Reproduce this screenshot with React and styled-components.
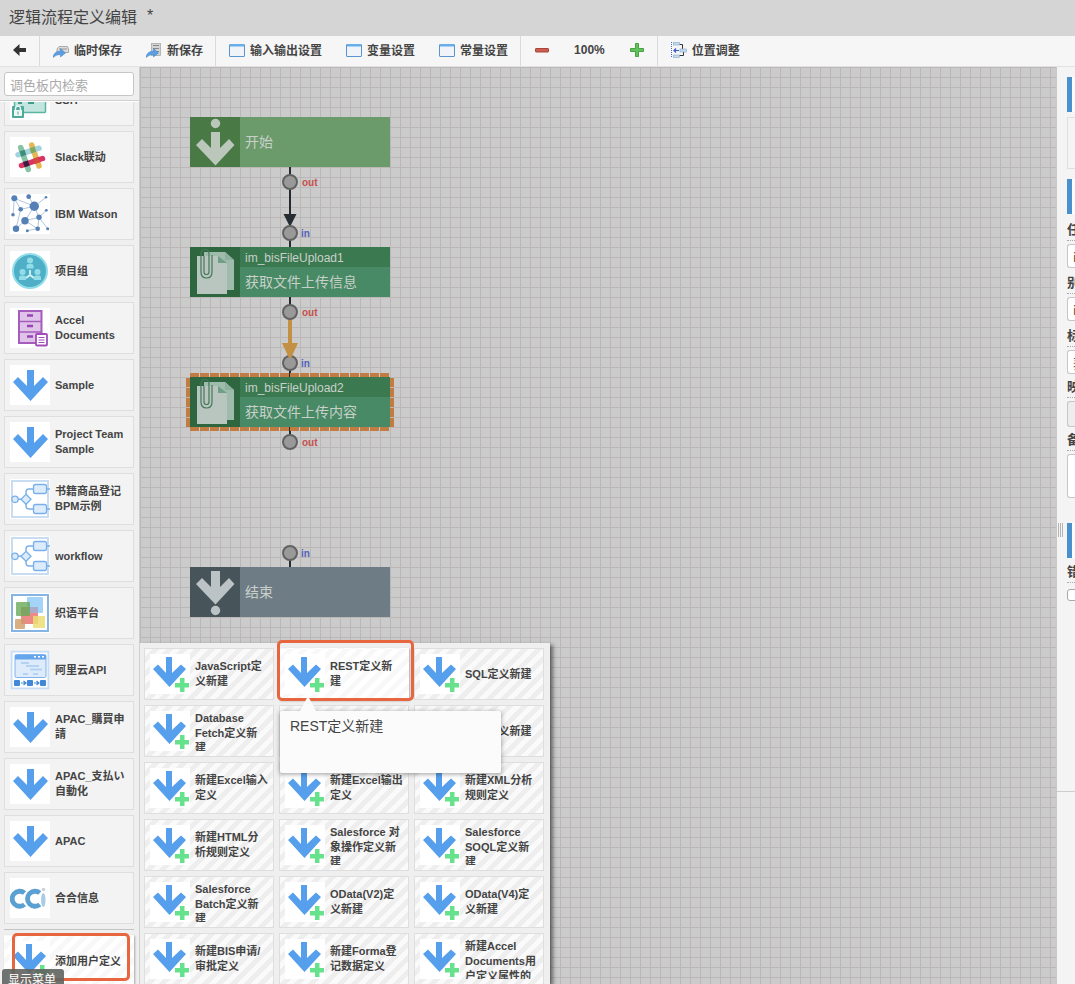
import React from "react";
import styled, { createGlobalStyle, css } from "styled-components";

const GlobalStyle = createGlobalStyle`
  * { box-sizing: border-box; }
  body {
    margin: 0;
    background: #f4f4f4;
    color: #444;
    font-family: "Liberation Sans", "Noto Sans CJK SC", sans-serif;
  }
  button, input, textarea { font-family: inherit; color: inherit; margin: 0; }
`;

/* ---------- page frame ---------- */

const Page = styled.div`
  display: flex;
  flex-direction: column;
  height: 100vh;
  overflow: hidden;
`;

const Header = styled.header`
  flex: 0 0 36px;
  display: flex;
  align-items: center;
  gap: 10px;
  padding: 0 9px 5px;
  background: #d5d5d5;
`;

const Title = styled.h1`
  margin: 0;
  font: 400 16px/24px "Noto Sans CJK SC", sans-serif;
`;

const Toolbar = styled.nav`
  flex: 0 0 31px;
  display: flex;
  background: #f6f6f6;
  border-bottom: 1px solid #e2e2e2;
`;

const ToolGroup = styled.div`
  display: flex;
  padding-left: 1px;
  & + & { border-left: 1px solid #dadada; }
`;

const ToolButton = styled.button`
  display: flex;
  align-items: center;
  gap: 5px;
  padding: 0 12px 3px;
  border: 0;
  background: none;
  font: 700 12px/18px "Noto Sans CJK SC", sans-serif;
  white-space: nowrap;
  svg { flex: none; }
`;

const Zoom = styled.output`
  display: flex;
  align-items: center;
  padding: 0 12px 3px;
  font: 700 12px/18px "Liberation Sans", sans-serif;
`;

const Body = styled.div`
  flex: 1;
  min-height: 0;
  display: flex;
`;

/* ---------- palette ---------- */

const Sidebar = styled.aside`
  flex: 0 0 140px;
  display: flex;
  flex-direction: column;
  background: #efefef;
  border-right: 1px solid #cfcfcf;
`;

const SearchBar = styled.div`
  flex: 0 0 34px;
  padding: 5px 5px 0 4px;
  border-bottom: 1px solid #d0d0d0;
`;

const SearchInput = styled.input`
  display: block;
  width: 100%;
  height: 24px;
  padding: 0 5px;
  border: 1px solid #c6c6c6;
  border-radius: 3px;
  background: #fff;
  font: 400 13px/20px "Noto Sans CJK SC", sans-serif;
  &::placeholder { color: #aaa; opacity: 1; }
`;

const PaletteList = styled.div`
  flex: 1;
  min-height: 0;
  display: flex;
  flex-direction: column;
  justify-content: flex-end;
  gap: 5px;
  padding: 0 5px 5px 4px;
  border-top: 1px solid #fff;
  overflow: hidden;
`;

const PaletteFooter = styled.div`
  position: relative;
  flex: 0 0 55px;
  min-height: 0;
  height: 55px;
  margin: 0 5px 0 4px;
  padding-top: 5px;
  border-top: 1px solid #c4c4c4;
`;

const Card = styled.button`
  flex: none;
  display: flex;
  align-items: center;
  gap: 5px;
  width: 130px;
  height: 52px;
  padding: 5px;
  border: 1px solid #dedede;
  background: #f3f3f3;
  text-align: left;
  svg { flex: none; background: #fff; }
  ${(p) => p.$striped && css`
    background: repeating-linear-gradient(135deg, #fafafa 0 5px, #eee 5px 10px);
  `}
  ${(p) => p.$active && css`
    border-color: transparent;
    background: repeating-linear-gradient(135deg, #fff 0 5px, #f8f8f8 5px 10px);
    box-shadow: 1px 1px 2px rgba(0, 0, 0, 0.3);
  `}
`;

const CardLabel = styled.span`
  width: 73px;
  max-height: 40px;
  overflow: hidden;
  font: 700 11px/15px "Liberation Sans", "Noto Sans CJK SC", sans-serif;
`;

const Highlight = styled.div`
  position: absolute;
  border: 3px solid #e8663f;
  border-radius: 5px;
  pointer-events: none;
`;

const FooterHighlight = styled(Highlight)`
  top: 3px;
  left: 8px;
  width: 118px;
  height: 48px;
`;

const MenuHighlight = styled(Highlight)`
  top: -8px;
  left: -2px;
  width: 137px;
  height: 61px;
`;

const StatusTip = styled.div`
  position: absolute;
  left: -2px;
  bottom: 0;
  width: 62px;
  height: 15px;
  padding-left: 6px;
  overflow: hidden;
  border-radius: 3px 3px 0 0;
  background: rgba(95, 99, 95, 0.9);
  color: #fff;
  font: 400 12px/20px "Noto Sans CJK SC", sans-serif;
`;

/* ---------- flow canvas ---------- */

const Canvas = styled.main`
  position: relative;
  flex: 1;
  min-width: 0;
  overflow: hidden;
  background:
    linear-gradient(90deg, #bbb7b7 1px, transparent 1px) 0 0 / 10px 10px,
    linear-gradient(#bbb7b7 1px, #cbcbcb 1px) 0 0 / 10px 10px;
  border-right: 1px solid #c8c8c8;
`;

const Wires = styled.svg`
  position: absolute;
  left: 0;
  top: 0;
`;

const Node = styled.div`
  position: absolute;
  left: 50px;
  top: ${(p) => p.$top}px;
  width: 200px;
  height: 50px;
  display: flex;
  background: ${(p) => p.$color};
  color: #c9d0ca;
`;

const NodeIcon = styled.div`
  flex: 0 0 50px;
  background: ${(p) => p.$color};
  svg { display: block; }
`;

const NodeText = styled.div`
  flex: 1;
  display: flex;
  flex-direction: column;
  justify-content: center;
`;

const NodeId = styled.div`
  padding: 2px 0 0 5px;
  background: #3b7a50;
  font-size: 12px;
  line-height: 18px;
`;

const NodeName = styled.div`
  padding: 0 0 2px 5px;
  font: 400 14px/28px "Noto Sans CJK SC", sans-serif;
`;

const PortLabel = styled.span`
  position: absolute;
  left: ${(p) => (p.$out ? 162 : 161)}px;
  top: ${(p) => p.$y - 5}px;
  color: ${(p) => (p.$out ? "#c4514d" : "#5261ba")};
  font-weight: 700;
  font-size: 10px;
  line-height: 12px;
`;

/* ---------- user definition menu ---------- */

const Menu = styled.div`
  position: absolute;
  left: 0;
  bottom: 0;
  width: 410px;
  height: 341px;
  background: #efefef;
  box-shadow: 3px 2px 4px rgba(0, 0, 0, 0.5);
`;

const MenuGrid = styled.div`
  display: grid;
  grid-template-columns: repeat(3, 130px);
  gap: 5px;
  padding: 5px 4px 0;
`;

const MenuCell = styled.div`
  position: relative;
`;

const Tooltip = styled.div`
  position: absolute;
  z-index: 2;
  top: 63px;
  left: 1px;
  width: 221px;
  height: 62px;
  padding: 5px 10px;
  border-radius: 2px;
  background: #fbfbfb;
  box-shadow: 0 1px 5px rgba(0, 0, 0, 0.4);
  font-size: 14px;
  line-height: 20px;
  &::before {
    content: "";
    position: absolute;
    left: 20px;
    top: -15px;
    border: 8px solid transparent;
    border-top: 0;
    border-bottom: 15px solid #fbfbfb;
  }
`;

/* ---------- property panel ---------- */

const Panel = styled.aside`
  flex: 0 0 18px;
  display: flex;
  flex-direction: column;
  overflow: hidden;
  background: #f4f4f4;
`;

const PanelTop = styled.div`
  flex: 1;
  min-height: 0;
  display: flex;
`;

const PanelBottom = styled.div`
  flex: 0 0 193px;
  border-top: 1px solid #cdcdcd;
`;

const Splitter = styled.div`
  flex: 0 0 10px;
  padding: 456px 4px 0 1px;
  &::before {
    content: "";
    display: block;
    height: 14px;
    background: repeating-linear-gradient(90deg, #b5b5b5 0 1px, transparent 1px 2px);
  }
`;

const Form = styled.form`
  flex: 1;
  min-width: 0;
  padding-top: 10px;
  overflow: hidden;
`;

const Section = styled.div`
  height: 35px;
  margin-bottom: ${(p) => p.$gap}px;
  border-left: 5px solid #4a90cc;
  background: #fcfcfc;
`;

const Preview = styled.div`
  height: 52px;
  margin-bottom: 10px;
  padding: 5px;
  border: 1px solid #dedede;
  border-right: 0;
  &::before { content: ""; display: block; height: 40px; background: #fff; }
`;

const Field = styled.label`
  display: block;
  margin-bottom: ${(p) => p.$gap || 4}px;
  overflow: hidden;
  font: 700 13px/20px "Noto Sans CJK SC", sans-serif;
`;

const FieldName = styled.span`
  display: block;
  height: 22px;
  margin-bottom: 3px;
  border-bottom: 1px dotted #aaa;
`;

const inputBox = css`
  display: block;
  width: 100%;
  border: 1px solid #c6c6c6;
  border-right: 0;
  border-radius: 3px 0 0 3px;
  background: #fff;
  padding: 0 0 0 5px;
`;

const TextInput = styled.input`
  ${inputBox}
  height: 24px;
  font-size: 13px;
`;

const MapButton = styled.button`
  ${inputBox}
  height: 26px;
  background: #ededed;
`;

const Note = styled.textarea`
  ${inputBox}
  height: 44px;
  resize: none;
  overflow: hidden;
`;

const Check = styled.input`
  appearance: none;
  display: block;
  margin-top: 6px;
  width: 12px;
  height: 12px;
  border: 1px solid #a8a8a8;
  border-radius: 3px;
  background: #fff;
`;

/* ---------- drawings ---------- */

const Svg40 = ({ children }) => (
  <svg width="40" height="40" viewBox="0 0 40 40" fill="none" aria-hidden="true">{children}</svg>
);

const ArrowIcon = () => (
  <Svg40>
    <path d="M17 5h7v16l9-9 5 5-17.500 19L3 17l5-5 9 9z" fill="#559fec" />
  </Svg40>
);

const ArrowPlusIcon = () => (
  <Svg40>
    <path d="M16 3h6v16l9-8.500 5 4.500-16.500 18L3 15l5-4.500 8 8.500z" fill="#559fec" />
    <path d="M30 24h4.500v5H39v4.500h-4.500V38H30v-4.500h-5V29h5z" fill="#66e28d" />
  </Svg40>
);

const SshIcon = () => (
  <Svg40>
    <rect x="4.500" y="8.500" width="31" height="24" rx="1" fill="#c3e5df" stroke="#5bb5a3" strokeWidth="1.500" />
    <path d="M8 23h4M18 23h6" stroke="#3f9c8b" strokeWidth="2" />
    <rect x="2" y="26" width="12" height="12" rx="1" fill="#4fa999" />
    <rect x="4" y="30" width="8" height="6" fill="#eaf7f4" />
    <path d="M5.500 30v-1.500a2.500 2.500 0 0 1 5 0V30" stroke="#eaf7f4" strokeWidth="1.400" />
    <path d="M8 31.500v3" stroke="#4fa999" />
  </Svg40>
);

const SlackIcon = () => (
  <Svg40>
    <g strokeWidth="5.500" strokeLinecap="round">
      <path d="M10.700 10.500l7.600 22" stroke="#86c3a5" />
      <path d="M21.700 8l7.300 21" stroke="#e5b854" />
      <path d="M8 17.800l21-6.600" stroke="#a3d3df" />
      <path d="M11.500 28.500l21-7" stroke="#d83564" />
    </g>
    <g strokeWidth="5.500">
      <path d="M10.300 17l5.200-1.600" stroke="#3d8f7a" />
      <path d="M20.400 13.800l5-1.600" stroke="#83a95d" />
      <path d="M13.800 27.700l5-1.700" stroke="#3d1a42" />
      <path d="M24 24.300l5.200-1.700" stroke="#d9483f" />
    </g>
  </Svg40>
);

const WATSON_NODES = [
  [4.3, 4.3, 3], [18.7, 2.7, 2.4], [36, 3.3, 1.3], [24.3, 12.3, 4.7], [10.7, 15.3, 2.3],
  [3, 20.7, 1.8], [36.3, 16.3, 1.4], [15, 26.7, 3.7], [29, 23.3, 2.7], [6, 34.7, 3.2],
  [17.3, 36.7, 1.5], [27.7, 34.7, 2.3], [37.7, 34.7, 1.5],
];

const WatsonIcon = () => (
  <Svg40>
    <path
      d="M4.300 4.300l20 8M4.300 4.300l6.400 11M4.300 4.300L3 20.700M18.700 2.700l5.600 9.600L36 3.300M10.700 15.300l13.600-3M10.700 15.300L6 34.700M24.300 12.300L15 26.700M24.300 12.300l4.700 11 7.300-7M29 23.300l-14 3.400-9 8M15 26.700l12.700 8-10.400 2M29 23.300l-1.300 11.400M29 23.300l8.700 11.400"
      stroke="#9db7d6" strokeWidth="0.800"
    />
    {WATSON_NODES.map(([x, y, r]) => <circle key={`${x}-${y}`} cx={x} cy={y} r={r} fill="#5580b5" />)}
  </Svg40>
);

const TeamIcon = () => (
  <Svg40>
    <circle cx="20" cy="20" r="17" fill="#4eafc7" stroke="#8fdde8" strokeWidth="2" />
    <path d="M20 19v5l-4 3M20 24l4 3" stroke="#d4f2f6" strokeWidth="1.800" />
    {[[20, 6.5], [12.5, 18], [27.5, 18]].map(([x, y]) => (
      <g key={x} fill="#93dde9">
        <circle cx={x} cy={y + 3} r="3" />
        <path d={`M${x - 3.5} ${y + 11}v-2.500q0-2 2-2h3q2 0 2 2v2.500z`} />
      </g>
    ))}
  </Svg40>
);

const CabinetIcon = () => (
  <Svg40>
    <rect x="9" y="3" width="22.500" height="32" fill="#dfc3e8" stroke="#a55cbc" strokeWidth="2" />
    <path d="M9 13.500h22M9 24h22" stroke="#a55cbc" strokeWidth="1.500" />
    <path d="M17 7.500h6M17 18h6M17 28.500h6" stroke="#9745b3" strokeWidth="2.500" />
    <rect x="26" y="26" width="11" height="11.500" rx="1" fill="#fff" stroke="#a04fba" strokeWidth="1.800" />
    <path d="M28.500 29.500h6M28.500 32h6M28.500 34.500h6" stroke="#a04fba" strokeWidth="1.200" />
  </Svg40>
);

const BpmIcon = () => (
  <Svg40>
    <rect x="2" y="2" width="36" height="36" stroke="#c8ddf2" strokeWidth="2" />
    <path d="M8 20.300h3M16 15.500V13q0-3 3-3h4M16 25v2q0 3 3 3h4M37 10h3M37 30h3" stroke="#79b0ea" strokeWidth="1.400" />
    <g fill="#dcecfb" stroke="#79b0ea" strokeWidth="1.300">
      <circle cx="5" cy="20.300" r="3.200" />
      <path d="M16 15.300l5 5-5 5-5-5z" />
      <rect x="23.500" y="5.500" width="13" height="9" rx="2" />
      <rect x="23.500" y="25.500" width="13" height="9" rx="2" />
    </g>
  </Svg40>
);

const TilesIcon = () => (
  <Svg40>
    <rect x="2" y="2" width="36" height="36" stroke="#86b5e3" strokeWidth="2" />
    <rect x="17" y="4" width="16" height="16" rx="1" fill="#a4d5f8" />
    <rect x="11" y="14" width="17" height="17" rx="1" fill="#e76d69" fillOpacity="0.800" />
    <rect x="17" y="14" width="11" height="6" fill="#a9abc9" />
    <rect x="6" y="9" width="14" height="14" rx="1" fill="#68aa58" fillOpacity="0.800" />
    <rect x="23" y="23" width="12" height="12" rx="1" fill="#eddd73" fillOpacity="0.850" />
    <rect x="5" y="26" width="10" height="10" rx="1" fill="#cf9b65" fillOpacity="0.800" />
  </Svg40>
);

const CloudApiIcon = () => (
  <Svg40>
    <rect x="1.500" y="1.500" width="37" height="37" stroke="#c8ddf2" strokeWidth="2" />
    <rect x="5" y="4.500" width="31" height="23" rx="1.500" fill="#ddebfa" stroke="#7fb3ed" />
    <path d="M5 5h31v4.500H5z" fill="#65a6ec" />
    <path d="M24 6.800h2M28 6.800h2M32 6.800h2" stroke="#fff" strokeWidth="1.500" />
    <path d="M11 13h8M16 16h13M13 24h5M23 24h5M20 19.500h12" stroke="#b4d2f3" strokeWidth="2" />
    <g fill="#4287d8">
      <rect x="4" y="30" width="6" height="6" rx="1" />
      <rect x="17" y="30" width="6" height="6" rx="1" />
      <rect x="30" y="30" width="6" height="6" rx="1" />
    </g>
    <path d="M11 33h5M13.500 31l2.500 2-2.500 2M24 33h5M26.500 31l2.500 2-2.500 2" stroke="#4287d8" strokeWidth="1.200" />
  </Svg40>
);

const CciIcon = () => (
  <Svg40>
    <g stroke="#5ba0d2" strokeWidth="4.800">
      <path d="M14.500 15a7.500 7.500 0 1 0 0 11.500" />
      <path d="M29.800 15a7.500 7.500 0 1 0 0 11.500" />
    </g>
    <ellipse cx="33.300" cy="22" rx="2.200" ry="7" fill="#a9cbe5" />
    <circle cx="33.500" cy="11.500" r="1.800" fill="#c9d3dc" />
  </Svg40>
);

const BackIcon = () => (
  <svg width="14" height="14" viewBox="0 0 14 14" aria-hidden="true">
    <path d="M0 7l6.500-6v4H13v4H6.500v4z" fill="#333" />
  </svg>
);

const SHARE_ARROW = "M0 15.500q1-6.500 7.500-6.500V6.500l5 4.500-5 4v-2.500Q3 12.500 0 15.500z";

const TempSaveIcon = () => (
  <svg width="16" height="16" viewBox="0 0 16 16" aria-hidden="true">
    <path d="M6 4.500h8.500l1 2.500v3.500H4V7z" fill="#ddd" stroke="#999" strokeWidth="0.800" />
    <path d="M6 7h8" stroke="#999" />
    <path d={SHARE_ARROW} fill="#5b9fe2" stroke="#3f7fc4" strokeWidth="0.500" />
  </svg>
);

const NewSaveIcon = () => (
  <svg width="16" height="16" viewBox="0 0 16 16" aria-hidden="true">
    <rect x="5.500" y="1.500" width="9" height="12" fill="#d4d4d4" stroke="#aaa" strokeWidth="0.800" />
    <path d="M7 3.500h6M7 6.500h6M7 9.500h6" stroke="#888" />
    <path d={SHARE_ARROW} fill="#5b9fe2" stroke="#3f7fc4" strokeWidth="0.500" />
  </svg>
);

const WindowIcon = () => (
  <svg width="16" height="16" viewBox="0 0 16 16" aria-hidden="true">
    <rect x="0.500" y="2.500" width="15" height="12" rx="0.500" fill="#f0f3f7" stroke="#5c94cf" />
    <path d="M1 2h14v3H1z" fill="#6aaee9" />
    <path d="M1 4.500h14" stroke="#a9d2f4" />
  </svg>
);

const MinusIcon = () => (
  <svg width="16" height="16" viewBox="0 0 16 16" aria-hidden="true">
    <rect x="1.500" y="6.500" width="13" height="3.500" rx="0.500" fill="#cb5d50" stroke="#ab4439" />
  </svg>
);

const PlusIcon = () => (
  <svg width="16" height="16" viewBox="0 0 16 16" aria-hidden="true">
    <path d="M6.500 1.500h3v5h5v3h-5v5h-3v-5h-5v-3h5z" fill="#62c15c" stroke="#45a342" />
  </svg>
);

const AlignIcon = () => (
  <svg width="16" height="16" viewBox="0 0 16 16" fill="none" aria-hidden="true">
    <path d="M0.500 0v16" stroke="#4a68c8" strokeDasharray="1 1" />
    <path d="M7.500 2.500h4V7M12.500 10v3.500H8" stroke="#333" />
    <path d="M3 8.500h5M5 6.500l-2 2 2 2" stroke="#3458c4" strokeWidth="1.200" />
    <g fill="#c3d9ee" stroke="#86a9cc" strokeWidth="0.600">
      <rect x="2.500" y="0.500" width="6" height="2.500" />
      <rect x="9" y="7" width="6.500" height="3" />
      <rect x="2.500" y="13" width="6" height="2.500" />
    </g>
  </svg>
);

const StartIcon = () => (
  <svg width="50" height="50" viewBox="0 0 50 50" fill="#bcc7bc" aria-hidden="true">
    <circle cx="25.500" cy="6.500" r="4.700" />
    <path d="M21 15h9v16l9-9 5.500 6-19 20.500L6 28l6-6 9 9z" />
  </svg>
);

const EndIcon = () => (
  <svg width="50" height="50" viewBox="0 0 50 50" fill="#bcc3c7" aria-hidden="true">
    <path d="M21 4h9v16l9-9 5.500 6-19 20.500L6 17l6-6 9 9z" />
    <circle cx="25.500" cy="43.500" r="4.700" />
  </svg>
);

const FilesIcon = () => (
  <svg width="50" height="50" viewBox="0 0 50 50" fill="none" aria-hidden="true">
    <path d="M14 5h21l9 8v30H14z" fill="#9fbbab" />
    <path d="M35 5v8h9z" fill="#8db09c" />
    <path d="M7 9h21l9 8v30H7z" fill="#b9c6bf" />
    <path d="M28 9v7h9z" fill="#6f9f86" />
    <path
      d="M19 10V7q0-4.500-4-4.500T11 7v18q0 6 5.500 6t5.500-6V8M19 10v15q0 2.500-2.500 2.500T14 25V9"
      stroke="#45785a" strokeWidth="1.200"
    />
  </svg>
);

const Port = ({ y }) => <circle cx="150" cy={y} r="7" fill="#999" stroke="#626262" strokeWidth="2" />;

const PORTS = [
  [115, true], [166, false], [245, true], [296, false], [375, true], [486, false],
];

/* ---------- content ---------- */

const PALETTE = [
  ["SSH", SshIcon],
  ["Slack联动", SlackIcon],
  ["IBM Watson", WatsonIcon],
  ["项目组", TeamIcon],
  ["Accel Documents", CabinetIcon],
  ["Sample", ArrowIcon],
  ["Project Team Sample", ArrowIcon],
  ["书籍商品登记BPM示例", BpmIcon],
  ["workflow", BpmIcon],
  ["织语平台", TilesIcon],
  ["阿里云API", CloudApiIcon],
  ["APAC_購買申請", ArrowIcon],
  ["APAC_支払い自動化", ArrowIcon],
  ["APAC", ArrowIcon],
  ["合合信息", CciIcon],
];

const DEFINITIONS = [
  "JavaScript定义新建", "REST定义新建", "SQL定义新建",
  "Database Fetch定义新建", "", "CSV定义新建",
  "新建Excel输入定义", "新建Excel输出定义", "新建XML分析规则定义",
  "新建HTML分析规则定义", "Salesforce 对象操作定义新建", "Salesforce SOQL定义新建",
  "Salesforce Batch定义新建", "OData(V2)定义新建", "OData(V4)定义新建",
  "新建BIS申请/审批定义", "新建Forma登记数据定义", "新建Accel Documents用户定义属性的",
];

const FileNode = ({ top, id, name }) => (
  <Node $top={top} $color="#478a65">
    <NodeIcon $color="#2e6640"><FilesIcon /></NodeIcon>
    <NodeText>
      <NodeId>{id}</NodeId>
      <NodeName>{name}</NodeName>
    </NodeText>
  </Node>
);

export default function App() {
  return (
    <Page>
      <GlobalStyle />
      <Header>
        <Title>逻辑流程定义编辑</Title>
        <span>*</span>
      </Header>
      <Toolbar>
        <ToolGroup>
          <ToolButton aria-label="返回"><BackIcon /></ToolButton>
        </ToolGroup>
        <ToolGroup>
          <ToolButton><TempSaveIcon />临时保存</ToolButton>
          <ToolButton><NewSaveIcon />新保存</ToolButton>
        </ToolGroup>
        <ToolGroup>
          <ToolButton><WindowIcon />输入输出设置</ToolButton>
          <ToolButton><WindowIcon />变量设置</ToolButton>
          <ToolButton><WindowIcon />常量设置</ToolButton>
        </ToolGroup>
        <ToolGroup>
          <ToolButton aria-label="缩小"><MinusIcon /></ToolButton>
          <Zoom>100%</Zoom>
          <ToolButton aria-label="放大"><PlusIcon /></ToolButton>
        </ToolGroup>
        <ToolGroup>
          <ToolButton><AlignIcon />位置调整</ToolButton>
        </ToolGroup>
      </Toolbar>
      <Body>
        <Sidebar>
          <SearchBar>
            <SearchInput type="text" placeholder="调色板内检索" aria-label="调色板内检索" />
          </SearchBar>
          <PaletteList>
            {PALETTE.map(([label, Icon]) => (
              <Card key={label}><Icon /><CardLabel>{label}</CardLabel></Card>
            ))}
          </PaletteList>
          <PaletteFooter>
            <Card $striped $active><ArrowPlusIcon /><CardLabel>添加用户定义</CardLabel></Card>
            <FooterHighlight />
            <StatusTip>显示菜单</StatusTip>
          </PaletteFooter>
        </Sidebar>
        <Canvas>
          <Wires width="300" height="560" viewBox="0 0 300 560" fill="none" aria-hidden="true">
            <path d="M150 100v80M150 230v20M150 296v14M150 360v15M150 486v14" stroke="#262b2e" strokeWidth="2" />
            <path d="M143.500 147h13L150 160z" fill="#262e33" />
            <path d="M150 245v35" stroke="#c49043" strokeWidth="4" />
            <g stroke="#c27c41" strokeWidth="4" strokeDasharray="9 1">
              <path d="M50 308h200M50 362h200M48 311v50M252 311v50" />
            </g>
            {PORTS.map(([y]) => <Port key={y} y={y} />)}
            <path d="M142 276h16l-7 15h-2z" fill="#c49043" />
          </Wires>
          <Node $top={50} $color="#6b9b6b">
            <NodeIcon $color="#497a46"><StartIcon /></NodeIcon>
            <NodeText><NodeName>开始</NodeName></NodeText>
          </Node>
          <FileNode top={180} id="im_bisFileUpload1" name="获取文件上传信息" />
          <FileNode top={310} id="im_bisFileUpload2" name="获取文件上传内容" />
          <Node $top={500} $color="#6e7c85">
            <NodeIcon $color="#47545a"><EndIcon /></NodeIcon>
            <NodeText><NodeName>结束</NodeName></NodeText>
          </Node>
          {PORTS.map(([y, out]) => (
            <PortLabel key={y} $y={y} $out={out}>{out ? "out" : "in"}</PortLabel>
          ))}
          <Menu>
            <MenuGrid>
              {DEFINITIONS.map((label, i) => (
                <MenuCell key={i}>
                  <Card $striped $active={i === 1}><ArrowPlusIcon /><CardLabel>{label}</CardLabel></Card>
                  {i === 1 && <MenuHighlight />}
                  {i === 1 && <Tooltip role="tooltip">REST定义新建</Tooltip>}
                </MenuCell>
              ))}
            </MenuGrid>
          </Menu>
        </Canvas>
        <Panel>
          <PanelTop>
            <Splitter />
            <Form>
              <Section $gap={5} />
              <Preview />
              <Section $gap={5} />
              <Field><FieldName>任</FieldName><TextInput defaultValue="i" /></Field>
              <Field><FieldName>别</FieldName><TextInput defaultValue="i" /></Field>
              <Field $gap={2}><FieldName>标</FieldName><TextInput defaultValue="获" /></Field>
              <Field $gap={2}><FieldName>映</FieldName><MapButton type="button" /></Field>
              <Field $gap={25}><FieldName>备</FieldName><Note /></Field>
              <Section $gap={3} />
              <Field><FieldName>错</FieldName><Check type="checkbox" /></Field>
            </Form>
          </PanelTop>
          <PanelBottom />
        </Panel>
      </Body>
    </Page>
  );
}
